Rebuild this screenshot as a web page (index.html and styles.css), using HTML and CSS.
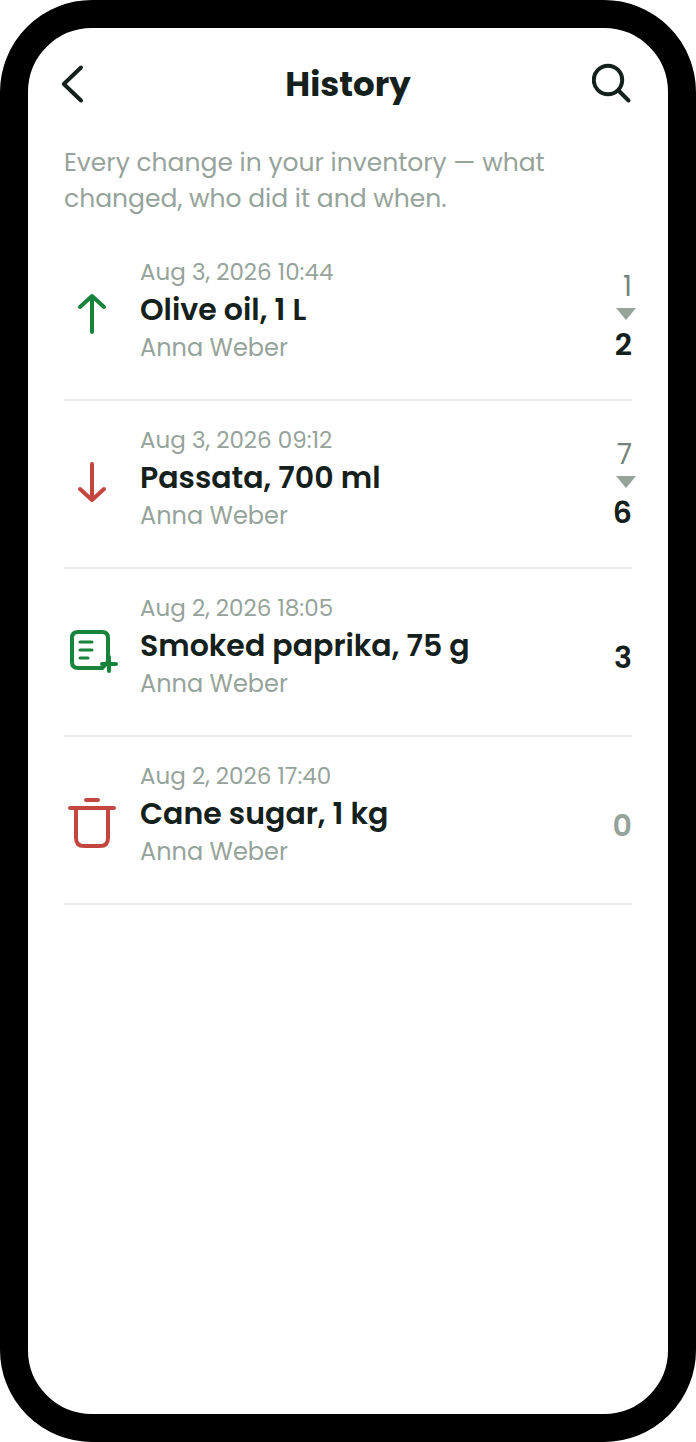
FILE: index.html
```html
<!DOCTYPE html>
<html lang="en">
<head>
<meta charset="utf-8">
<meta name="viewport" content="width=device-width, initial-scale=1">
<title>History</title>
<link rel="stylesheet" href="styles.css">
</head>
<body>
<main class="phone">
  <header class="header">
    <button class="icon-button" type="button" aria-label="Back">
      <svg width="44" height="48" viewBox="0 0 44 48"><path d="M21 7.500L3.800 24L21 40.500" stroke-width="4"/></svg>
    </button>
    <h1 class="title">History</h1>
    <button class="icon-button" type="button" aria-label="Search">
      <svg width="44" height="48" viewBox="0 0 44 48"><circle cx="16" cy="20" r="14.200" stroke-width="4"/><path d="M26.500 30.500L36.500 40.500" stroke-width="4"/></svg>
    </button>
  </header>
  <p class="intro">Every change in your inventory — what changed, who did it and when.</p>
  <ul class="list">
    <li class="row">
      <svg class="icon added" viewBox="0 0 56 64"><path d="M28 50V14M16 25L28 14L40 25"/></svg>
      <div class="details">
        <time class="meta date" datetime="2026-08-03T10:44">Aug 3, 2026 10:44</time>
        <h2 class="name">Olive oil, 1 L</h2>
        <p class="meta">Anna Weber</p>
      </div>
      <div class="amount">
        <span class="before">1</span>
        <span class="arrow"></span>
        <span class="after">2</span>
      </div>
    </li>
    <li class="row">
      <svg class="icon removed" viewBox="0 0 56 64"><path d="M28 14V50M16 39L28 50L40 39"/></svg>
      <div class="details">
        <time class="meta date" datetime="2026-08-03T09:12">Aug 3, 2026 09:12</time>
        <h2 class="name">Passata, 700 ml</h2>
        <p class="meta">Anna Weber</p>
      </div>
      <div class="amount">
        <span class="before">7</span>
        <span class="arrow"></span>
        <span class="after">6</span>
      </div>
    </li>
    <li class="row">
      <svg class="icon added" viewBox="0 0 56 64"><path d="M38 50H14Q8 50 8 44V20Q8 14 14 14H38Q44 14 44 20V44"/><path d="M38 46H52M45 39V53M38 50L44 44"/><path class="fine" d="M16 24H28M16 32H28M16 40H24"/></svg>
      <div class="details">
        <time class="meta date" datetime="2026-08-02T18:05">Aug 2, 2026 18:05</time>
        <h2 class="name">Smoked paprika, 75 g</h2>
        <p class="meta">Anna Weber</p>
      </div>
      <div class="amount single">
        <span class="after">3</span>
      </div>
    </li>
    <li class="row">
      <svg class="icon removed" viewBox="0 0 56 64"><path d="M22 14H34M6 22H50M12 22V52Q12 60 20 60H36Q44 60 44 52V22"/></svg>
      <div class="details">
        <time class="meta date" datetime="2026-08-02T17:40">Aug 2, 2026 17:40</time>
        <h2 class="name">Cane sugar, 1 kg</h2>
        <p class="meta">Anna Weber</p>
      </div>
      <div class="amount single">
        <span class="after empty">0</span>
      </div>
    </li>
  </ul>
</main>
</body>
</html>
```
FILE: styles.css
```css
* {
  box-sizing: border-box;
}

body,
h1,
h2,
p,
ul {
  margin: 0;
  padding: 0;
}

body {
  background: #fff;
  color: #14201b;
  font-family: Poppins, Inter, "Liberation Sans", sans-serif;
}

.phone {
  min-height: 100vh;
  padding: 0 36px;
  border: 28px solid #000;
  border-radius: 92px;
  background: #fff;
}

.header {
  display: flex;
  align-items: center;
  justify-content: space-between;
  height: 112px;
}

.icon-button {
  display: flex;
  margin: 0 -4px;
  padding: 0;
  border: 0;
  background: none;
  color: inherit;
  cursor: pointer;
}

svg {
  fill: none;
  stroke: currentColor;
  stroke-linecap: round;
  stroke-linejoin: round;
}

.title {
  font-size: 34px;
  font-weight: 700;
  line-height: 48px;
}

.intro {
  padding: 5px 0 16px;
  color: #96a39b;
  font-size: 25px;
  line-height: 36px;
}

.list {
  list-style: none;
}

.row {
  display: grid;
  grid-template-columns: 56px 1fr auto;
  column-gap: 20px;
  align-items: center;
  padding: 20px 0 32px;
  border-bottom: 2px solid #e9eeec;
}

.icon {
  width: 56px;
  height: 64px;
  margin-top: 8px;
  stroke-width: 4;
}

.fine {
  stroke-width: 3;
}

.added {
  color: #17833b;
}

.removed {
  color: #c4453d;
}

.meta {
  display: block;
  color: #96a39b;
  font-size: 24px;
  line-height: 38px;
}

.date {
  font-size: 23px;
}

.name {
  font-size: 30px;
  font-weight: 600;
  line-height: 38px;
}

.amount {
  display: flex;
  flex-direction: column;
  align-items: flex-end;
  padding-top: 12px;
  font-size: 30px;
  line-height: 38px;
}

.single {
  padding-top: 24px;
}

.before {
  color: #75837b;
  font-size: 28px;
}

.arrow {
  width: 20px;
  height: 12px;
  margin: 2px -4px 6px 0;
  background: #96a39b;
  clip-path: polygon(0 0, 100% 0, 50% 100%);
}

.after {
  font-weight: 600;
}

.empty {
  color: #96a39b;
}
```
